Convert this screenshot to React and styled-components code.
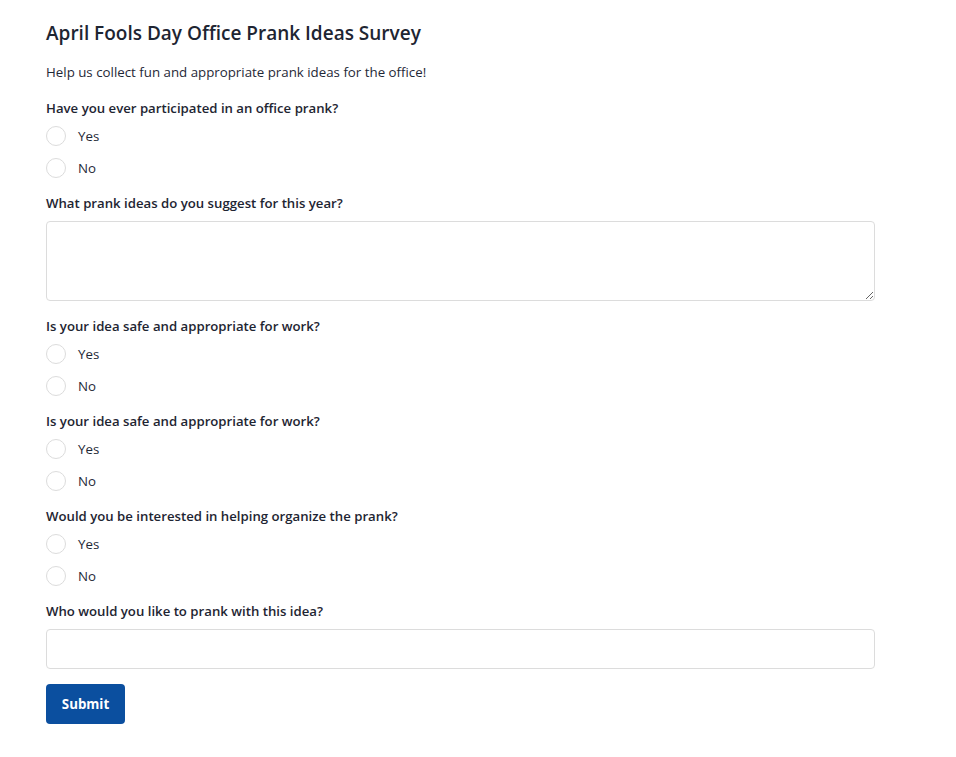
import React, { useState } from "react";
import styled, { createGlobalStyle } from "styled-components";

const GlobalStyle = createGlobalStyle`
  body {
    margin: 0;
    background: #ffffff;
    font-family: "Open Sans", "Noto Sans", sans-serif;
    color: #1f2937;
  }
`;

const Page = styled.div`
  padding: 19px 46px 30px;
  width: 829px;
`;

const Title = styled.h1`
  margin: 0 0 15px;
  font-size: 19px;
  line-height: 28px;
  font-weight: 600;
  color: #1e2532;
`;

const Intro = styled.p`
  margin: 0 0 16px;
  font-size: 13.3px;
  line-height: 20px;
`;

const Field = styled.div`
  margin-bottom: ${(p) => (p.$wide ? "15px" : "9px")};
`;

const Label = styled.div`
  font-size: 13.2px;
  line-height: 20px;
  font-weight: 600;
  color: #1e2532;
  margin-bottom: ${(p) => (p.$gap ? "8px" : "2px")};
`;

const Option = styled.label`
  display: flex;
  align-items: center;
  gap: 12px;
  height: 32px;
  font-size: 13.3px;
  cursor: pointer;
`;

const Radio = styled.input.attrs({ type: "radio" })`
  appearance: none;
  margin: 0;
  width: 20px;
  height: 20px;
  border: 1px solid #dcdcdc;
  border-radius: 50%;
  background: #fff;
  &:checked {
    border: 6px solid #0b4f9f;
  }
`;

const TextArea = styled.textarea`
  display: block;
  box-sizing: border-box;
  width: 100%;
  height: 80px;
  border: 1px solid #dcdcdc;
  border-radius: 4px;
  padding: 8px 10px;
  font: inherit;
  font-size: 14px;
`;

const TextInput = styled.input`
  display: block;
  box-sizing: border-box;
  width: 100%;
  height: 40px;
  border: 1px solid #dcdcdc;
  border-radius: 4px;
  padding: 0 10px;
  font: inherit;
  font-size: 14px;
`;

const SubmitButton = styled.button`
  height: 40px;
  width: 79px;
  padding: 0;
  border: none;
  border-radius: 4px;
  background: #0b4f9f;
  color: #fff;
  font-family: inherit;
  font-size: 13.3px;
  font-weight: 700;
  cursor: pointer;
`;

function YesNo({ name, label }) {
  const [value, setValue] = useState("");
  return (
    <Field>
      <Label>{label}</Label>
      {["Yes", "No"].map((opt) => (
        <Option key={opt}>
          <Radio name={name} checked={value === opt} onChange={() => setValue(opt)} />
          {opt}
        </Option>
      ))}
    </Field>
  );
}

export default function App() {
  return (
    <>
      <GlobalStyle />
      <Page>
        <Title>April Fools Day Office Prank Ideas Survey</Title>
        <Intro>Help us collect fun and appropriate prank ideas for the office!</Intro>
        <YesNo name="participated" label="Have you ever participated in an office prank?" />
        <Field $wide>
          <Label $gap>What prank ideas do you suggest for this year?</Label>
          <TextArea />
        </Field>
        <YesNo name="safe1" label="Is your idea safe and appropriate for work?" />
        <YesNo name="safe2" label="Is your idea safe and appropriate for work?" />
        <YesNo name="organize" label="Would you be interested in helping organize the prank?" />
        <Field $wide>
          <Label $gap>Who would you like to prank with this idea?</Label>
          <TextInput type="text" />
        </Field>
        <SubmitButton>Submit</SubmitButton>
      </Page>
    </>
  );
}
